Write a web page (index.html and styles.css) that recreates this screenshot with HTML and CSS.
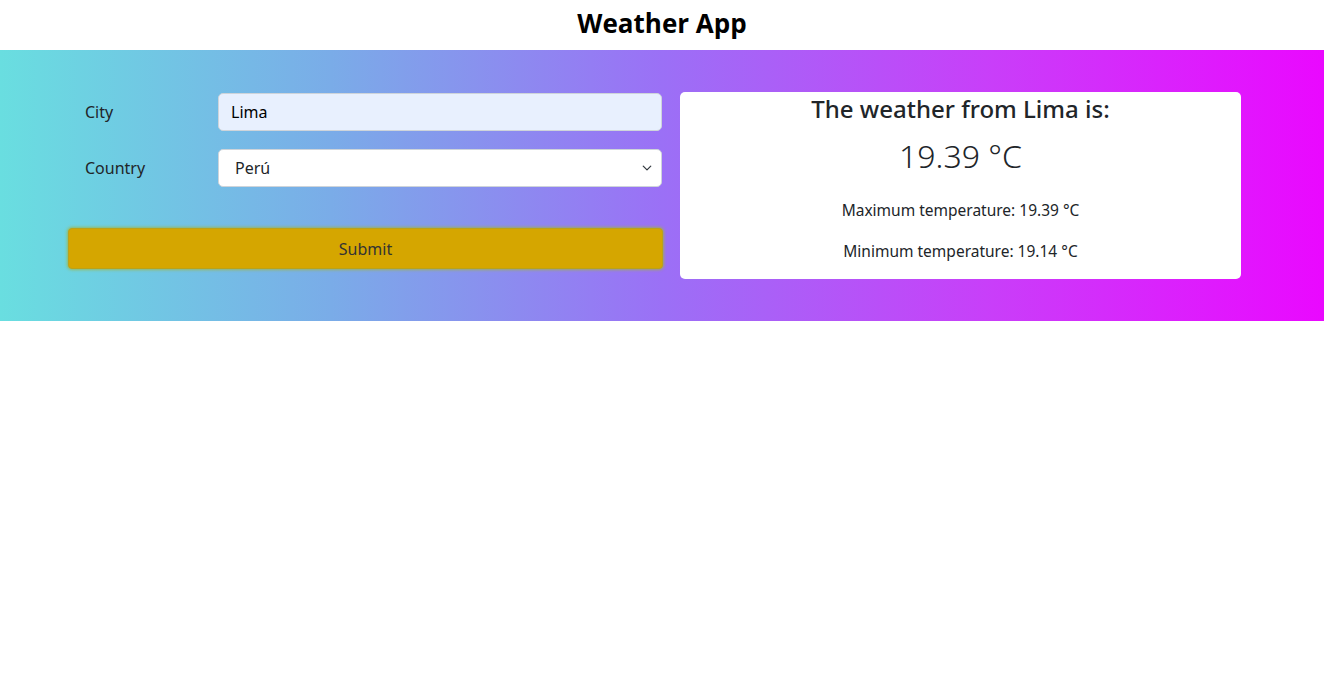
FILE: index.html
```html
<!DOCTYPE html>
<html lang="en">
<head>
<meta charset="utf-8">
<title>Weather App</title>
<link rel="stylesheet" href="styles.css">
</head>
<body>
<header class="header">
  <h1 class="title">Weather App</h1>
</header>
<section class="band">
  <div class="container">
    <form class="form">
      <div class="row">
        <label class="label" for="city">City</label>
        <input class="field field-auto" id="city" type="text" value="Lima">
      </div>
      <div class="row">
        <label class="label" for="country">Country</label>
        <div class="select">
          <span class="select-text">Perú</span>
          <svg class="chev" width="10" height="10" viewBox="0 0 16 16"><path d="M2 5l6 6 6-6" fill="none" stroke="#343a40" stroke-width="2" stroke-linecap="round" stroke-linejoin="round"/></svg>
        </div>
      </div>
      <button class="submit" type="button">Submit</button>
    </form>
    <div class="card">
      <h2 class="card-title">The weather from Lima is:</h2>
      <p class="temp">19.39 °C</p>
      <p class="minmax">Maximum temperature: 19.39 °C</p>
      <p class="minmax">Minimum temperature: 19.14 °C</p>
    </div>
  </div>
</section>
</body>
</html>
```
FILE: styles.css
```css
* { box-sizing: border-box; }
body {
  margin: 0;
  background: #fff;
  font-family: "Noto Sans", "Open Sans", sans-serif;
  color: #212529;
}
.header {
  height: 50px;
  display: flex;
  align-items: center;
  justify-content: center;
}
.title {
  margin: 0;
  font-family: "Open Sans", sans-serif;
  font-weight: 700;
  font-size: 26px;
  color: #000;
  line-height: 1;
  padding-bottom: 4px;
}
.band {
  height: 271px;
  background: linear-gradient(90deg, #69dee0 0%, #7aace8 25%, #9b70f6 50%, #c93ef9 75%, #ea08ff 100%);
  padding-top: 42px;
}
.container {
  display: flex;
  gap: 17px;
  padding: 0 83px 0 68px;
  align-items: flex-start;
}
.form {
  width: 595px;
  display: flex;
  flex-direction: column;
  padding-top: 1px;
}
.row {
  display: flex;
  align-items: center;
  padding-left: 17px;
  margin-bottom: 18px;
}
.label {
  width: 133px;
  font-size: 16px;
  color: #212529;
}
.field, .select {
  width: 444px;
  height: 38px;
  border: 1px solid #ced4da;
  border-radius: 5px;
  font-family: inherit;
  font-size: 16px;
  color: #212529;
  padding: 0 12px;
  background: #fff;
}
.field-auto { background: #e8f0fe; color: #000; }
.select {
  display: flex;
  align-items: center;
  justify-content: space-between;
  padding: 0 9px 0 16px;
}
.chev { display: block; }
.submit {
  margin-top: 23px;
  height: 41px;
  width: 595px;
  background: #d5a600;
  border: 1px solid #b9a21c;
  border-radius: 4px;
  box-shadow: 0 0 3px 1px rgba(160, 180, 60, 0.8);
  font-family: inherit;
  font-size: 16px;
  color: #333;
}
.card {
  width: 561px;
  height: 187px;
  background: #fff;
  border-radius: 5px;
  text-align: center;
  padding-top: 2px;
}
.card-title {
  margin: 0;
  font-size: 24px;
  font-weight: 500;
  line-height: 30px;
}
.temp {
  margin: 12px 0 0;
  font-size: 32px;
  line-height: 40px;
  font-weight: 300;
}
.minmax {
  margin: 23px 0 0;
  font-size: 15.5px;
  line-height: 22px;
}
.minmax + .minmax { margin-top: 19px; }
```
